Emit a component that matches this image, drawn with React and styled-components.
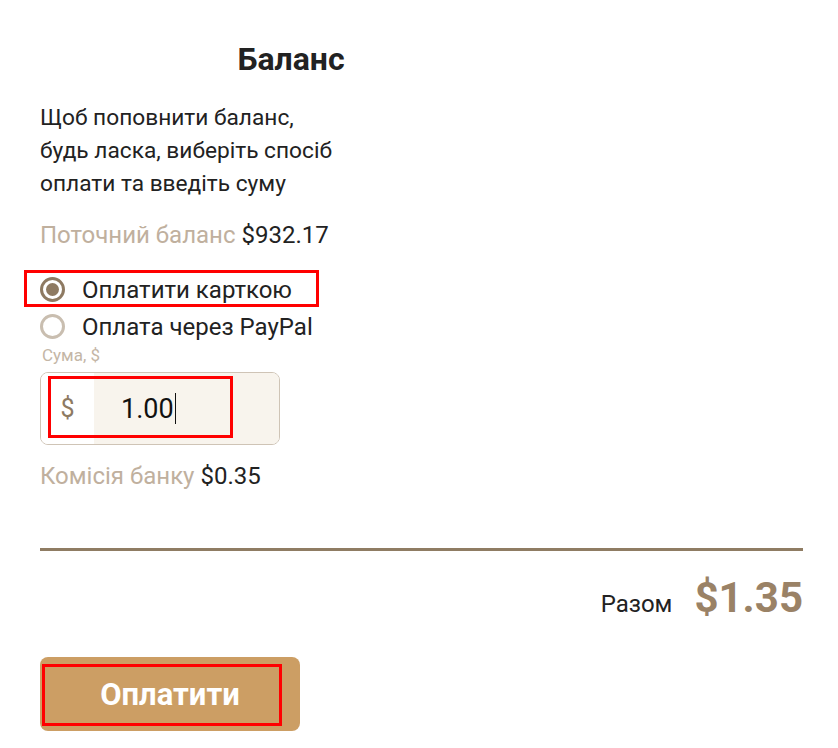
import React from "react";
import styled, { createGlobalStyle } from "styled-components";

const GlobalStyle = createGlobalStyle`
  body {
    margin: 0;
    background: #ffffff;
    font-family: Roboto, "Noto Sans", sans-serif;
    color: #222222;
  }
`;

const Page = styled.div`
  width: 762px;
  padding: 40px 0 0 40px;
`;

const Title = styled.h2`
  width: 502px;
  margin: 0;
  text-align: center;
  font-size: 32px;
  line-height: 38px;
  font-weight: 700;
  color: #222222;
`;

const Description = styled.p`
  width: 300px;
  margin: 23px 0 0;
  font-size: 22.7px;
  line-height: 33px;
`;

const InfoLine = styled.div`
  margin-top: ${(p) => p.$top || 0}px;
  font-size: 24px;
  line-height: 33px;
`;

const Muted = styled.span`
  color: #c0b09e;
`;

const Options = styled.div`
  display: flex;
  flex-direction: column;
  margin-top: 19px;
`;

const Annotated = styled.div`
  position: relative;
`;

const Highlight = styled.div`
  position: absolute;
  left: ${(p) => p.$left}px;
  top: ${(p) => p.$top}px;
  width: ${(p) => p.$width}px;
  height: ${(p) => p.$height}px;
  border: 3px solid #ff0000;
  box-sizing: border-box;
  pointer-events: none;
`;

const RadioRow = styled.label`
  display: flex;
  align-items: center;
  gap: 17px;
  height: 37px;
  font-size: 24px;
  color: #222222;
`;

const RadioCircle = styled.span`
  width: 25px;
  height: 25px;
  box-sizing: border-box;
  border-radius: 50%;
  border: 3px solid ${(p) => (p.$checked ? "#8e7a62" : "#c9beb0")};
  display: flex;
  align-items: center;
  justify-content: center;

  &::after {
    content: "";
    width: 13px;
    height: 13px;
    border-radius: 50%;
    background: #8e7a62;
    display: ${(p) => (p.$checked ? "block" : "none")};
  }
`;

const FieldLabel = styled.div`
  margin: 1px 0 0 2px;
  font-size: 17px;
  line-height: 18px;
  color: #c4b6a6;
`;

const AmountBox = styled.div`
  display: flex;
  width: 240px;
  height: 73px;
  margin-top: 8px;
  box-sizing: border-box;
  border: 1px solid #cfc4b6;
  border-radius: 8px;
  overflow: hidden;
`;

const Prefix = styled.div`
  width: 53px;
  display: flex;
  align-items: center;
  justify-content: center;
  background: #ffffff;
  font-size: 25px;
  color: #8e7a62;
`;

const AmountValue = styled.div`
  flex: 1;
  display: flex;
  align-items: center;
  padding-left: 27px;
  background: #f8f4ed;
  font-size: 27px;
  color: #111111;
`;

const Caret = styled.span`
  width: 1px;
  height: 31px;
  margin-left: 1px;
  background: #111111;
`;

const Divider = styled.hr`
  width: 763px;
  margin: 55px 0 0;
  border: none;
  height: 3px;
  background: #8f7c63;
`;

const TotalRow = styled.div`
  display: flex;
  justify-content: flex-end;
  align-items: baseline;
  gap: 22px;
  width: 763px;
  margin-top: 22px;
`;

const TotalLabel = styled.span`
  font-size: 24px;
  color: #222222;
`;

const TotalValue = styled.span`
  font-size: 42px;
  font-weight: 700;
  color: #9a8266;
`;

const PayButton = styled.button`
  width: 260px;
  height: 74px;
  margin-top: 35px;
  border: none;
  border-radius: 8px;
  background: #cc9e64;
  color: #ffffff;
  font-family: Roboto, "Noto Sans", sans-serif;
  font-size: 31px;
  font-weight: 700;
  cursor: pointer;
`;

export default function App() {
  return (
    <>
      <GlobalStyle />
      <Page>
        <Title>Баланс</Title>
        <Description>
          Щоб поповнити баланс, будь ласка, виберіть спосіб оплати та введіть суму
        </Description>
        <InfoLine $top={19}>
          <Muted>Поточний баланс</Muted> $932.17
        </InfoLine>

        <Options>
          <Annotated>
            <RadioRow>
              <RadioCircle $checked />
              Оплатити карткою
            </RadioRow>
            <Highlight $left={-16} $top={-1} $width={295} $height={37} />
          </Annotated>
          <RadioRow>
            <RadioCircle />
            Оплата через PayPal
          </RadioRow>
        </Options>

        <FieldLabel>Сума, $</FieldLabel>
        <Annotated>
          <AmountBox>
            <Prefix>$</Prefix>
            <AmountValue>
              1.00
              <Caret />
            </AmountValue>
          </AmountBox>
          <Highlight $left={8} $top={4} $width={185} $height={62} />
        </Annotated>

        <InfoLine $top={15}>
          <Muted>Комісія банку</Muted> $0.35
        </InfoLine>

        <Divider />
        <TotalRow>
          <TotalLabel>Разом</TotalLabel>
          <TotalValue>$1.35</TotalValue>
        </TotalRow>

        <Annotated>
          <PayButton>Оплатити</PayButton>
          <Highlight $left={2} $top={42} $width={240} $height={62} />
        </Annotated>
      </Page>
    </>
  );
}
